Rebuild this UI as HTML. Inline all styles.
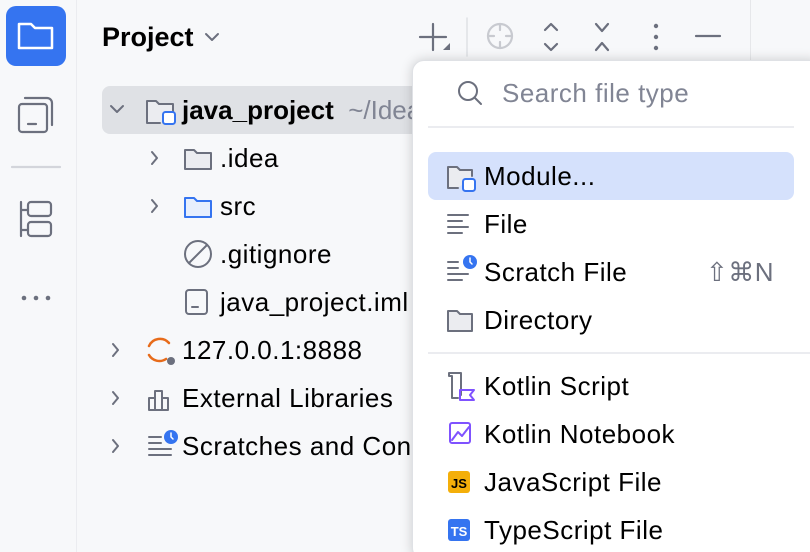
<!DOCTYPE html>
<html style="overflow:hidden"><head><style>
*{margin:0;padding:0;box-sizing:border-box}
html,body{width:810px;height:552px;overflow:hidden}
body{background:#f7f8fa;font-family:"Liberation Sans",sans-serif;color:#000;position:relative}
.a{position:absolute}
.t{position:absolute;font-size:26px;letter-spacing:0.5px;line-height:48px;white-space:nowrap}
svg{position:absolute;overflow:visible}
</style></head><body>
<div class="a" style="left:76px;top:0;width:1px;height:552px;background:#ebecf0"></div>
<div class="a" style="left:750px;top:0;width:1px;height:60px;background:#e6e7ea"></div>
<div class="a" style="left:6px;top:6px;width:60px;height:60px;border-radius:10px;background:#3574f0"></div>
<svg style="left:0;top:0" width="810" height="552" fill="none" stroke-linecap="round" stroke-linejoin="round">
<path d="M19 24h12l4 4h17v20H19z" stroke="#fff" stroke-width="2.5"/>
<g stroke="#6c707e" stroke-width="2.2">
<rect x="19" y="104" width="28" height="28" rx="3"/><path d="M25 98h22a5 5 0 0 1 5 5v22"/><path d="M28 124h8"/>
<path d="M12 167h48" stroke="#d3d5db"/>
<path d="M21 202v34M21 210h7M21 230h7"/><rect x="28" y="202" width="23" height="14" rx="3"/><rect x="28" y="222" width="23" height="14" rx="3"/>
</g>
<g fill="#6c707e"><circle cx="24" cy="298" r="2.3"/><circle cx="36" cy="298" r="2.3"/><circle cx="48" cy="298" r="2.3"/></g>
<path d="M206 34l6 6 6-6" stroke="#6c707e" stroke-width="2"/>
<g stroke="#6c707e" stroke-width="2.2">
<path d="M433 24v26M420 37h26"/>
<path d="M545 30l6-6 6 6M545 44l6 6 6-6"/>
<path d="M596 24l6 7 6-7M596 50l6-7 6 7"/>
<path d="M696 36h24"/>
</g>
<path d="M443 50l7-7v7z" fill="#6c707e"/>
<path d="M467 18v38" stroke="#dfe1e5" stroke-width="1.5"/>
<g stroke="#c8cad0" stroke-width="2.2"><circle cx="500" cy="36" r="12"/><path d="M500 24v6M500 42v6M488 36h6M506 36h6"/></g>
<g fill="#6c707e"><circle cx="656" cy="26" r="2.2"/><circle cx="656" cy="37" r="2.2"/><circle cx="656" cy="48" r="2.2"/></g>
</svg>
<div class="t" style="left:102px;top:13px;font-weight:bold;font-size:27px;letter-spacing:0">Project</div>
<div class="a" style="left:102px;top:86px;width:320px;height:48px;border-radius:8px;background:#dfe1e5"></div>
<svg style="left:0;top:0" width="810" height="552" fill="none" stroke-linecap="round" stroke-linejoin="round">
<g stroke="#6c707e" stroke-width="2">
<path d="M111 106l6 6 6-6"/>
<path d="M152 152l5 6-5 6M152 200l5 6-5 6M113 344l5 6-5 6M113 392l5 6-5 6M113 440l5 6-5 6"/>
<path d="M160 123h-13v-22h9l3 3h14v8" fill="#ebecf0"/>
<path d="M211 169h-26v-19h9l3 3h14v16z" fill="#ebecf0"/>
<circle cx="198" cy="254" r="13"/><path d="M189 263l18-18"/>
<rect x="186" y="290" width="21" height="24" rx="3"/><path d="M192 307h6"/>
<path d="M149 410v-12h6v12zM155 410v-19h7v19zM162 410v-12h6v12z"/>
<path d="M149 437h12M149 443h12M149 449h22M149 455h22"/>
</g>
<path d="M211 217h-26v-19h9l3 3h14v16z" stroke="#3574f0" stroke-width="2" fill="#e7effd"/>
<rect x="163" y="112" width="12" height="12" rx="2.5" stroke="#3574f0" stroke-width="2" fill="#fff"/>
<path d="M149 346a12 12 0 0 1 20-3M149 355a12 12 0 0 0 17 4" stroke="#e76b1a" stroke-width="2.5"/>
<circle cx="171" cy="361" r="4" fill="#6c707e"/>
<circle cx="171" cy="437" r="7" fill="#3574f0"/><path d="M171 433v4l2 2" stroke="#fff" stroke-width="1.5"/>
</svg>
<div class="t" style="left:182px;top:86px;font-weight:bold;letter-spacing:0">java_project <span style="font-weight:normal;color:#818594">&nbsp;~/IdeaProjects</span></div>
<div class="t" style="left:220px;top:134px">.idea</div>
<div class="t" style="left:220px;top:182px">src</div>
<div class="t" style="left:220px;top:230px">.gitignore</div>
<div class="t" style="left:220px;top:278px">java_project.iml</div>
<div class="t" style="left:182px;top:326px">127.0.0.1:8888</div>
<div class="t" style="left:182px;top:374px">External Libraries</div>
<div class="t" style="left:182px;top:422px">Scratches and Consoles</div>

<div class="a" style="left:412px;top:60px;width:410px;height:500px;background:#fff;border-radius:12px;box-shadow:0 0 12px rgba(0,0,0,.18);border:1px solid #dfe1e5"></div>
<div class="a" style="left:428px;top:126px;width:366px;height:2px;background:#ebecf0"></div>
<div class="a" style="left:428px;top:352px;width:382px;height:2px;background:#ebecf0"></div>
<div class="a" style="left:428px;top:152px;width:366px;height:48px;border-radius:8px;background:#d5e1fc"></div>
<div class="t" style="left:502px;top:69px;color:#818594">Search file type</div>
<div class="t" style="left:484px;top:152px">Module...</div>
<div class="t" style="left:484px;top:200px">File</div>
<div class="t" style="left:484px;top:248px">Scratch File</div>
<div class="t" style="left:706px;top:248px;color:#6c707e">⇧⌘N</div>
<div class="t" style="left:484px;top:296px">Directory</div>
<div class="t" style="left:484px;top:362px">Kotlin Script</div>
<div class="t" style="left:484px;top:410px">Kotlin Notebook</div>
<div class="t" style="left:484px;top:458px">JavaScript File</div>
<div class="t" style="left:484px;top:506px">TypeScript File</div>
<svg style="left:0;top:0" width="810" height="552" fill="none" stroke-linecap="round" stroke-linejoin="round">
<g stroke="#6c707e" stroke-width="2">
<circle cx="468" cy="91" r="9"/><path d="M475 98l6 6"/>
<path d="M458 188h-10v-21h9l3 3h12v6" fill="#ebecf0"/>
<path d="M448 215h20M448 221h14M448 227h20M448 233h14"/>
<path d="M448 262h10M448 268h10M448 274h20M448 280h14"/>
<path d="M472 331h-24v-20h9l3 3h12z" fill="#ebecf0"/>
<path d="M452 376h-3v-3h12v22M452 376v22h6"/>
</g>
<rect x="463" y="179" width="12" height="12" rx="2.5" stroke="#3574f0" stroke-width="2" fill="#fff"/>
<circle cx="470" cy="262" r="7" fill="#3574f0"/><path d="M470 258v4l2 2" stroke="#fff" stroke-width="1.5"/>
<path d="M460 390h14l-4 5 4 5h-14z" stroke="#7f52ff" stroke-width="2"/>
<rect x="450" y="423" width="20" height="20" rx="2" stroke="#7f52ff" stroke-width="2"/>
<path d="M452 440l6-8 4 4 7-9" stroke="#7f52ff" stroke-width="2"/>
<rect x="448" y="471" width="22" height="22" rx="3" fill="#f4af0a"/>
<rect x="448" y="519" width="22" height="22" rx="3" fill="#3574f0"/>
</svg>
<div class="a" style="left:448px;top:471px;width:22px;height:22px;font:bold 13px/26px 'Liberation Sans',sans-serif;text-align:center;color:#000">JS</div>
<div class="a" style="left:448px;top:519px;width:22px;height:22px;font:bold 13px/26px 'Liberation Sans',sans-serif;text-align:center;color:#fff">TS</div>
</body></html>
